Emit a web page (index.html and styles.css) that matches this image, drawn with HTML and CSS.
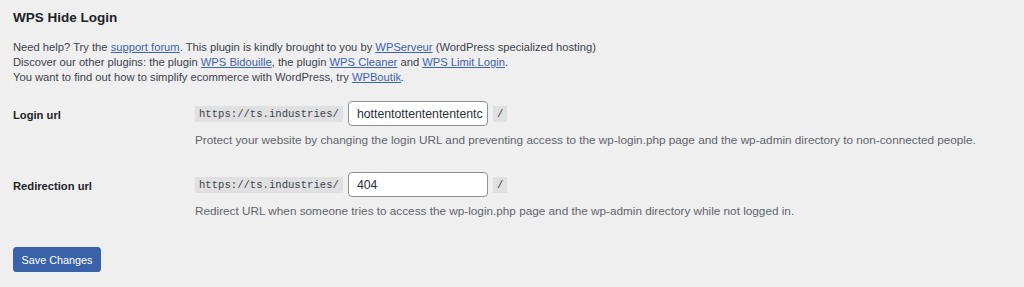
FILE: index.html
```html
<!DOCTYPE html>
<html>
<head>
<meta charset="utf-8">
<link rel="stylesheet" href="styles.css">
</head>
<body>
<div class="wrap">
  <h1 class="title">WPS Hide Login</h1>
  <p class="intro">Need help? Try the <a href="#">support forum</a>. This plugin is kindly brought to you by <a href="#">WPServeur</a> (WordPress specialized hosting)<br>
  Discover our other plugins: the plugin <a href="#">WPS Bidouille</a>, the plugin <a href="#">WPS Cleaner</a> and <a href="#">WPS Limit Login</a>.<br>
  You want to find out how to simplify ecommerce with WordPress, try <a href="#">WPBoutik</a>.</p>

  <div class="form-table">
    <div class="row row-first">
      <div class="label">Login url</div>
      <div class="cell">
        <div class="field">
          <code class="prefix">https://ts.industries/</code>
          <input class="text" type="text" value="hottentottententententc">
          <code class="slash">/</code>
        </div>
        <p class="desc">Protect your website by changing the login URL and preventing access to the wp-login.php page and the wp-admin directory to non-connected people.</p>
      </div>
    </div>
    <div class="row row-second">
      <div class="label">Redirection url</div>
      <div class="cell">
        <div class="field">
          <code class="prefix">https://ts.industries/</code>
          <input class="text" type="text" value="404">
          <code class="slash">/</code>
        </div>
        <p class="desc">Redirect URL when someone tries to access the wp-login.php page and the wp-admin directory while not logged in.</p>
      </div>
    </div>
  </div>

  <div class="submit">
    <button class="button-primary" type="button">Save Changes</button>
  </div>
</div>
</body>
</html>
```

FILE: styles.css
```css
html, body {
  margin: 0;
  padding: 0;
  background: #efefef;
}
body {
  font-family: "Liberation Sans", Arial, sans-serif;
  font-size: 11px;
  color: #2f3439;
}
.wrap {
  padding: 10px 13px 0 13px;
}
.title {
  margin: 0;
  font-size: 13.5px;
  line-height: 16px;
  font-weight: bold;
  color: #1d2327;
}
.intro {
  margin: 14px 0 0 0;
  line-height: 15px;
  font-size: 11.2px;
  color: #3c434a;
}
.intro a {
  color: #3d64ad;
  text-decoration: underline;
}
.form-table {
  margin-top: 16px;
}
.row {
  display: grid;
  grid-template-columns: 182px 1fr;
}
.row-second {
  margin-top: 25px;
}
.label {
  font-weight: bold;
  font-size: 11.2px;
  line-height: 25px;
  padding-top: 2px;
  color: #1d2327;
}
.field {
  display: flex;
  align-items: center;
  gap: 5px;
  height: 25px;
}
.prefix, .slash {
  font-family: "Liberation Mono", "Courier New", monospace;
  font-size: 10.6px;
  line-height: 16px;
  background: #e0e0e0;
  color: #3c434a;
  padding: 0 4px;
}
.slash {
  padding: 0 4px;
  width: 6px;
}
.text {
  box-sizing: border-box;
  width: 140px;
  height: 25px;
  margin: 0;
  border: 1px solid #8c8f94;
  border-radius: 4px;
  background: #fff;
  padding: 0 0 0 8px;
  font-family: "Liberation Sans", Arial, sans-serif;
  font-size: 12.3px;
  color: #2c3338;
  outline: none;
}
.desc {
  margin: 6px 0 0 0;
  line-height: 15px;
  font-size: 11.75px;
  color: #5f656b;
}
.submit {
  margin-top: 29px;
}
.button-primary {
  width: 88px;
  height: 25px;
  padding: 0;
  border: 1px solid #3a62a8;
  border-radius: 3px;
  background: #3a62a8;
  color: #fff;
  font-family: "Liberation Sans", Arial, sans-serif;
  font-size: 10.8px;
  cursor: pointer;
}
```
